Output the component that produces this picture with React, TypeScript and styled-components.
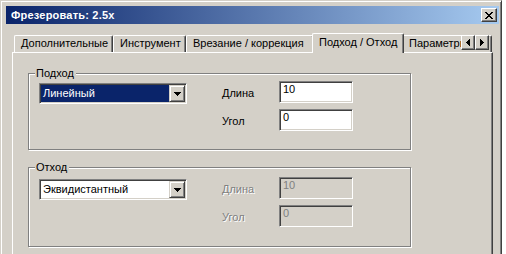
import React from 'react';
import styled, { createGlobalStyle } from 'styled-components';

const FACE = '#d4d0c8';
const SHADOW = '#808080';
const DARK = '#404040';

const Global = createGlobalStyle`
  html, body { margin: 0; padding: 0; background: #ffffff; overflow: hidden; }
  body { font-family: "Liberation Sans", Arial, sans-serif; font-size: 11px; color: #000; }
  * { box-sizing: border-box; }
`;

const Window = styled.div`
  width: 502px;
  height: 254px;
  background: ${FACE};
  border: 1px solid;
  border-bottom: 0;
  border-color: ${FACE} ${DARK} ${DARK} ${FACE};
  box-shadow: inset 1px 1px #fff, inset -1px 0 ${SHADOW};
  padding: 5px 2px 0 5px;
  display: flex;
  flex-direction: column;
`;

const TitleBar = styled.div`
  height: 18px;
  flex: none;
  display: flex;
  align-items: center;
  padding: 0 2px 0 5px;
  background: linear-gradient(to right, #0a246a, #a6caf0);
`;

const TitleText = styled.span`
  color: #fff;
  font-weight: bold;
  font-size: 11px;
  letter-spacing: 0.2px;
  line-height: 13px;
  white-space: nowrap;
`;

const CaptionButton = styled.div`
  margin-left: auto;
  width: 16px;
  height: 14px;
  background: ${FACE};
  border: 1px solid;
  border-color: #fff ${DARK} ${DARK} #fff;
  box-shadow: inset -1px -1px ${SHADOW};
  display: flex;
  align-items: center;
  justify-content: center;
`;

const Body = styled.div`
  flex: 1;
  display: flex;
  flex-direction: column;
  padding: 9px 6px 0 6px;
  min-height: 0;
`;

const TabStrip = styled.div`
  position: relative;
  height: 20px;
  flex: none;
  display: flex;
  align-items: flex-end;
  padding-left: 2px;
  overflow: hidden;
  z-index: 2;
`;

const Tab = styled.div<{ $active?: boolean; $w: number }>`
  flex: none;
  position: relative;
  width: ${(p) => p.$w}px;
  height: ${(p) => (p.$active ? 20 : 17)}px;
  margin: 0 ${(p) => (p.$active ? -2 : 0)}px ${(p) => (p.$active ? 0 : 1)}px;
  z-index: ${(p) => (p.$active ? 2 : 1)};
  background: ${FACE};
  border-top: 1px solid #fff;
  border-left: 1px solid #fff;
  border-right: 1px solid ${DARK};
  box-shadow: inset -1px 0 ${SHADOW};
  border-radius: 2px 2px 0 0;
  padding: ${(p) => (p.$active ? '2px 0 0 6px' : '1px 0 0 6px')};
  line-height: 13px;
  white-space: nowrap;
  overflow: hidden;
`;

const ScrollPair = styled.div`
  position: absolute;
  top: 2px;
  right: 4px;
  display: flex;
  z-index: 3;
`;

const ScrollButton = styled.div`
  width: 14px;
  height: 15px;
  background: ${FACE};
  border: 1px solid;
  border-color: #fff ${DARK} ${DARK} #fff;
  box-shadow: inset -1px -1px ${SHADOW};
  display: flex;
  align-items: center;
  justify-content: center;
`;

const Panel = styled.div`
  position: relative;
  z-index: 1;
  flex: 1;
  margin-top: -1px;
  border: 1px solid;
  border-bottom: 0;
  border-color: #fff ${DARK} ${DARK} #fff;
  box-shadow: inset -1px 0 ${SHADOW};
  padding: 20px 0 0 15px;
  display: flex;
  flex-direction: column;
  overflow: hidden;
`;

const GroupBox = styled.div<{ $h: number; $top: number; $pad: number }>`
  position: relative;
  flex: none;
  width: 383px;
  height: ${(p) => p.$h}px;
  margin-top: ${(p) => p.$top}px;
  border: 1px solid ${SHADOW};
  box-shadow: inset 1px 1px #fff, 1px 1px #fff;
  padding: ${(p) => p.$pad}px 0 0 10px;
  display: flex;
  align-items: flex-start;
`;

const Legend = styled.span`
  position: absolute;
  top: -7px;
  left: 6px;
  padding: 0 2px 0 1px;
  background: ${FACE};
  line-height: 13px;
  white-space: nowrap;
`;

const Combo = styled.div`
  margin-top: 2px;
  width: 148px;
  height: 21px;
  background: #fff;
  border: 1px solid;
  border-color: ${SHADOW} #fff #fff ${SHADOW};
  box-shadow: inset 1px 1px ${DARK}, inset -1px -1px ${FACE};
  padding: 1px;
  display: flex;
`;

const ComboText = styled.div<{ $selected?: boolean }>`
  flex: 1;
  display: flex;
  align-items: center;
  padding-left: 2px;
  background: ${(p) => (p.$selected ? '#0a246a' : '#fff')};
  color: ${(p) => (p.$selected ? '#fff' : '#000')};
  white-space: nowrap;
  line-height: 13px;
`;

const ComboButton = styled.div`
  flex: none;
  width: 16px;
  height: 17px;
  background: ${FACE};
  border: 1px solid;
  border-color: ${FACE} ${DARK} ${DARK} ${FACE};
  box-shadow: inset 1px 1px #fff, inset -1px -1px ${SHADOW};
  display: flex;
  align-items: center;
  justify-content: center;
`;

const Fields = styled.div`
  margin-left: 34px;
  display: grid;
  grid-template-columns: 58px 74px;
  row-gap: 6px;
  align-items: center;
`;

const Label = styled.span<{ $disabled?: boolean }>`
  padding-left: 1px;
  padding-top: 2px;
  line-height: 13px;
  color: ${(p) => (p.$disabled ? SHADOW : '#000')};
  text-shadow: ${(p) => (p.$disabled ? '1px 1px #fff' : 'none')};
`;

const Edit = styled.div<{ $disabled?: boolean }>`
  width: 74px;
  height: 22px;
  background: ${(p) => (p.$disabled ? FACE : '#fff')};
  color: ${(p) => (p.$disabled ? SHADOW : '#000')};
  border: 1px solid;
  border-color: ${SHADOW} #fff #fff ${SHADOW};
  box-shadow: inset 1px 1px ${DARK}, inset -1px -1px ${FACE};
  padding: 1px 0 0 3px;
  line-height: 13px;
`;

const DownArrow = () => (
  <svg width="7" height="4" viewBox="0 0 7 4" shapeRendering="crispEdges">
    <path d="M0 0h7v1h-1v1h-1v1h-1v1h-1v-1h-1v-1h-1v-1h-1z" fill="#000" />
  </svg>
);

const LeftArrow = () => (
  <svg width="4" height="7" viewBox="0 0 4 7" shapeRendering="crispEdges">
    <path d="M3 0h1v7h-1v-1h-1v-1h-1v-1h-1v-1h1v-1h1v-1h1z" fill="#000" />
  </svg>
);

const RightArrow = () => (
  <svg width="4" height="7" viewBox="0 0 4 7" shapeRendering="crispEdges">
    <path d="M0 0h1v1h1v1h1v1h1v1h-1v1h-1v1h-1v1h-1z" fill="#000" />
  </svg>
);

const CloseGlyph = () => (
  <svg width="8" height="7" viewBox="0 0 8 7" shapeRendering="crispEdges">
    <path
      d="M0 0h2v1h1v1h2v-1h1v-1h2v1h-1v1h-1v1h-1v1h1v1h1v1h1v1h-2v-1h-1v-1h-2v1h-1v1h-2v-1h1v-1h1v-1h1v-1h-1v-1h-1v-1h-1z"
      fill="#000"
    />
  </svg>
);

type Group = {
  title: string;
  combo: string;
  selected: boolean;
  disabled: boolean;
  h: number;
  top: number;
  pad: number;
};

const groups: Group[] = [
  { title: 'Подход', combo: 'Линейный', selected: true, disabled: false, h: 77, top: 0, pad: 7 },
  { title: 'Отход', combo: 'Эквидистантный', selected: false, disabled: true, h: 80, top: 17, pad: 9 },
];

const tabs = [
  { label: 'Дополнительные', w: 99 },
  { label: 'Инструмент', w: 73 },
  { label: 'Врезание / коррекция', w: 128 },
  { label: 'Подход / Отход', w: 92, active: true },
  { label: 'Параметры', w: 90 },
];

export default function App() {
  return (
    <>
      <Global />
      <Window>
        <TitleBar>
          <TitleText>Фрезеровать: 2.5x</TitleText>
          <CaptionButton>
            <CloseGlyph />
          </CaptionButton>
        </TitleBar>
        <Body>
          <TabStrip>
            {tabs.map((t) => (
              <Tab key={t.label} $w={t.w} $active={t.active}>
                {t.label}
              </Tab>
            ))}
            <ScrollPair>
              <ScrollButton>
                <LeftArrow />
              </ScrollButton>
              <ScrollButton>
                <RightArrow />
              </ScrollButton>
            </ScrollPair>
          </TabStrip>
          <Panel>
            {groups.map((g) => (
              <GroupBox key={g.title} $h={g.h} $top={g.top} $pad={g.pad}>
                <Legend>{g.title}</Legend>
                <Combo>
                  <ComboText $selected={g.selected}>{g.combo}</ComboText>
                  <ComboButton>
                    <DownArrow />
                  </ComboButton>
                </Combo>
                <Fields>
                  <Label $disabled={g.disabled}>Длина</Label>
                  <Edit $disabled={g.disabled}>10</Edit>
                  <Label $disabled={g.disabled}>Угол</Label>
                  <Edit $disabled={g.disabled}>0</Edit>
                </Fields>
              </GroupBox>
            ))}
          </Panel>
        </Body>
      </Window>
    </>
  );
}
